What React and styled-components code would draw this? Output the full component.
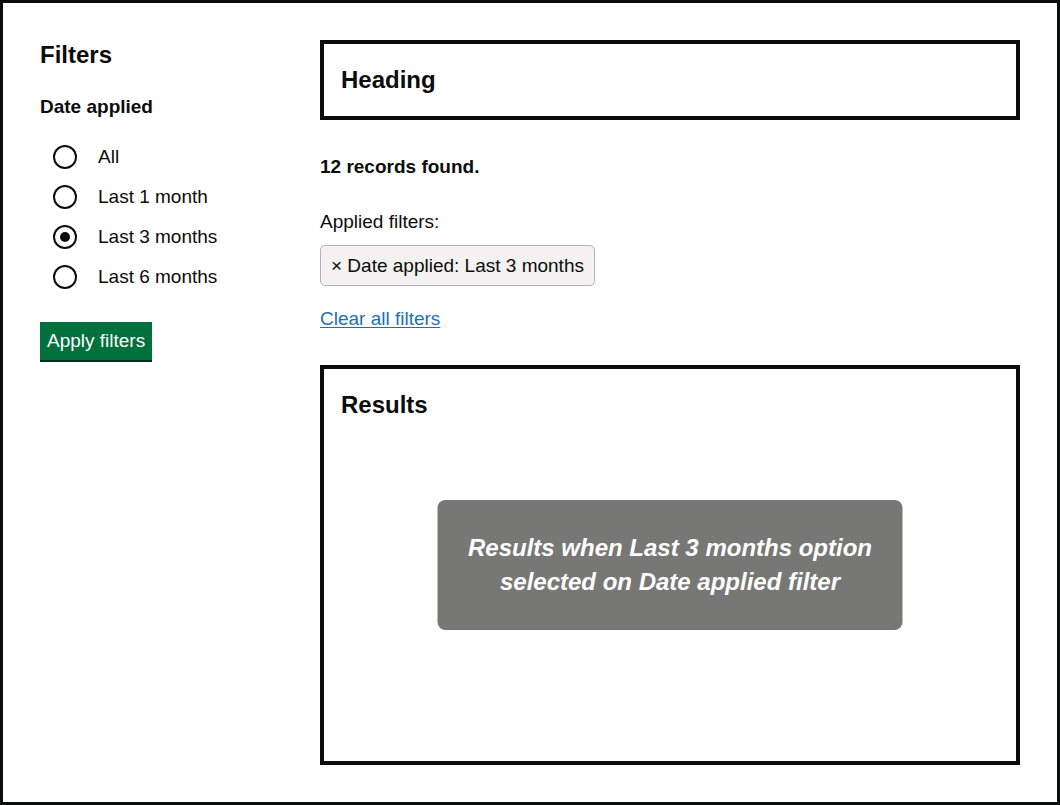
import React from 'react';
import styled, { createGlobalStyle } from 'styled-components';

const GlobalStyle = createGlobalStyle`
  html, body {
    margin: 0;
    padding: 0;
    background: #fff;
  }
  body {
    font-family: "Liberation Sans", Arial, sans-serif;
    color: #0b0c0c;
  }
`;

const Frame = styled.div`
  box-sizing: border-box;
  width: 1060px;
  height: 805px;
  border: 3px solid #0b0c0c;
  padding: 37px;
  display: grid;
  grid-template-columns: 1fr 700px;
  align-items: start;
`;

const Sidebar = styled.aside`
  display: flex;
  flex-direction: column;
  align-items: flex-start;
`;

const Title = styled.h2`
  margin: 0;
  font-size: 24px;
  line-height: 30px;
  font-weight: 700;
`;

const GroupLabel = styled.h3`
  margin: 24px 0 0;
  font-size: 19px;
  line-height: 25px;
  font-weight: 700;
`;

const RadioList = styled.div`
  margin-top: 18px;
  display: flex;
  flex-direction: column;
`;

const RadioRow = styled.label`
  display: flex;
  align-items: center;
  height: 40px;
  padding-left: 13px;
  font-size: 19px;
  gap: 21px;
`;

const RadioCircle = styled.span`
  box-sizing: border-box;
  width: 24px;
  height: 24px;
  border: 2px solid #0b0c0c;
  border-radius: 50%;
  display: flex;
  align-items: center;
  justify-content: center;

  &::after {
    content: '';
    width: 10px;
    height: 10px;
    border-radius: 50%;
    background: #0b0c0c;
    display: ${p => (p.$checked ? 'block' : 'none')};
  }
`;

const ApplyButton = styled.button`
  margin-top: 25px;
  box-sizing: border-box;
  height: 38px;
  padding: 0 7px;
  border: 0;
  border-radius: 0;
  background: #00703c;
  box-shadow: 0 2px 0 #002d18;
  color: #fff;
  font-family: inherit;
  font-size: 19px;
  line-height: 38px;
  cursor: pointer;
`;

const Main = styled.main`
  display: flex;
  flex-direction: column;
  align-items: flex-start;
`;

const Box = styled.section`
  box-sizing: border-box;
  position: relative;
  width: 100%;
  height: ${p => p.$height}px;
  margin-top: ${p => p.$top || 0}px;
  border: 4px solid #0b0c0c;
  padding: 21px 17px;
`;

const BoxTitle = styled.h2`
  margin: 0;
  font-size: 24px;
  line-height: 30px;
  font-weight: 700;
`;

const Count = styled.p`
  margin: 34px 0 0;
  font-size: 19px;
  line-height: 25px;
  font-weight: 700;
`;

const AppliedLabel = styled.p`
  margin: 30px 0 0;
  font-size: 19px;
  line-height: 25px;
`;

const Tag = styled.button`
  margin-top: 11px;
  box-sizing: border-box;
  height: 41px;
  padding: 0 10px;
  background: #f3f2f1;
  border: 1px solid #b1b4b6;
  border-radius: 5px;
  color: #0b0c0c;
  font-family: inherit;
  font-size: 19px;
  cursor: pointer;
`;

const ClearLink = styled.a`
  margin-top: 20px;
  font-size: 19px;
  line-height: 25px;
  color: #1d70b8;
  text-decoration: underline;
  text-underline-offset: 2px;
`;

const Note = styled.div`
  position: absolute;
  left: 50%;
  top: 50%;
  transform: translate(-50%, -50%);
  width: 465px;
  height: 130px;
  border-radius: 8px;
  background: #777876;
  color: #fff;
  display: flex;
  align-items: center;
  justify-content: center;
  text-align: center;
  font-size: 24px;
  line-height: 34px;
  font-weight: 700;
  font-style: italic;
`;

const options = [
  { label: 'All' },
  { label: 'Last 1 month' },
  { label: 'Last 3 months', checked: true },
  { label: 'Last 6 months' },
];

const App = () => {
  return (
    <>
      <GlobalStyle />
      <Frame>
        <Sidebar>
          <Title>Filters</Title>
          <GroupLabel>Date applied</GroupLabel>
          <RadioList>
            {options.map(o => (
              <RadioRow key={o.label}>
                <RadioCircle $checked={o.checked} />
                {o.label}
              </RadioRow>
            ))}
          </RadioList>
          <ApplyButton>Apply filters</ApplyButton>
        </Sidebar>
        <Main>
          <Box $height={80}>
            <BoxTitle>Heading</BoxTitle>
          </Box>
          <Count>12 records found.</Count>
          <AppliedLabel>Applied filters:</AppliedLabel>
          <Tag>× Date applied: Last 3 months</Tag>
          <ClearLink href="#">Clear all filters</ClearLink>
          <Box $height={400} $top={34}>
            <BoxTitle>Results</BoxTitle>
            <Note>
              Results when Last 3 months option
              <br />
              selected on Date applied filter
            </Note>
          </Box>
        </Main>
      </Frame>
    </>
  );
};

export default App;
